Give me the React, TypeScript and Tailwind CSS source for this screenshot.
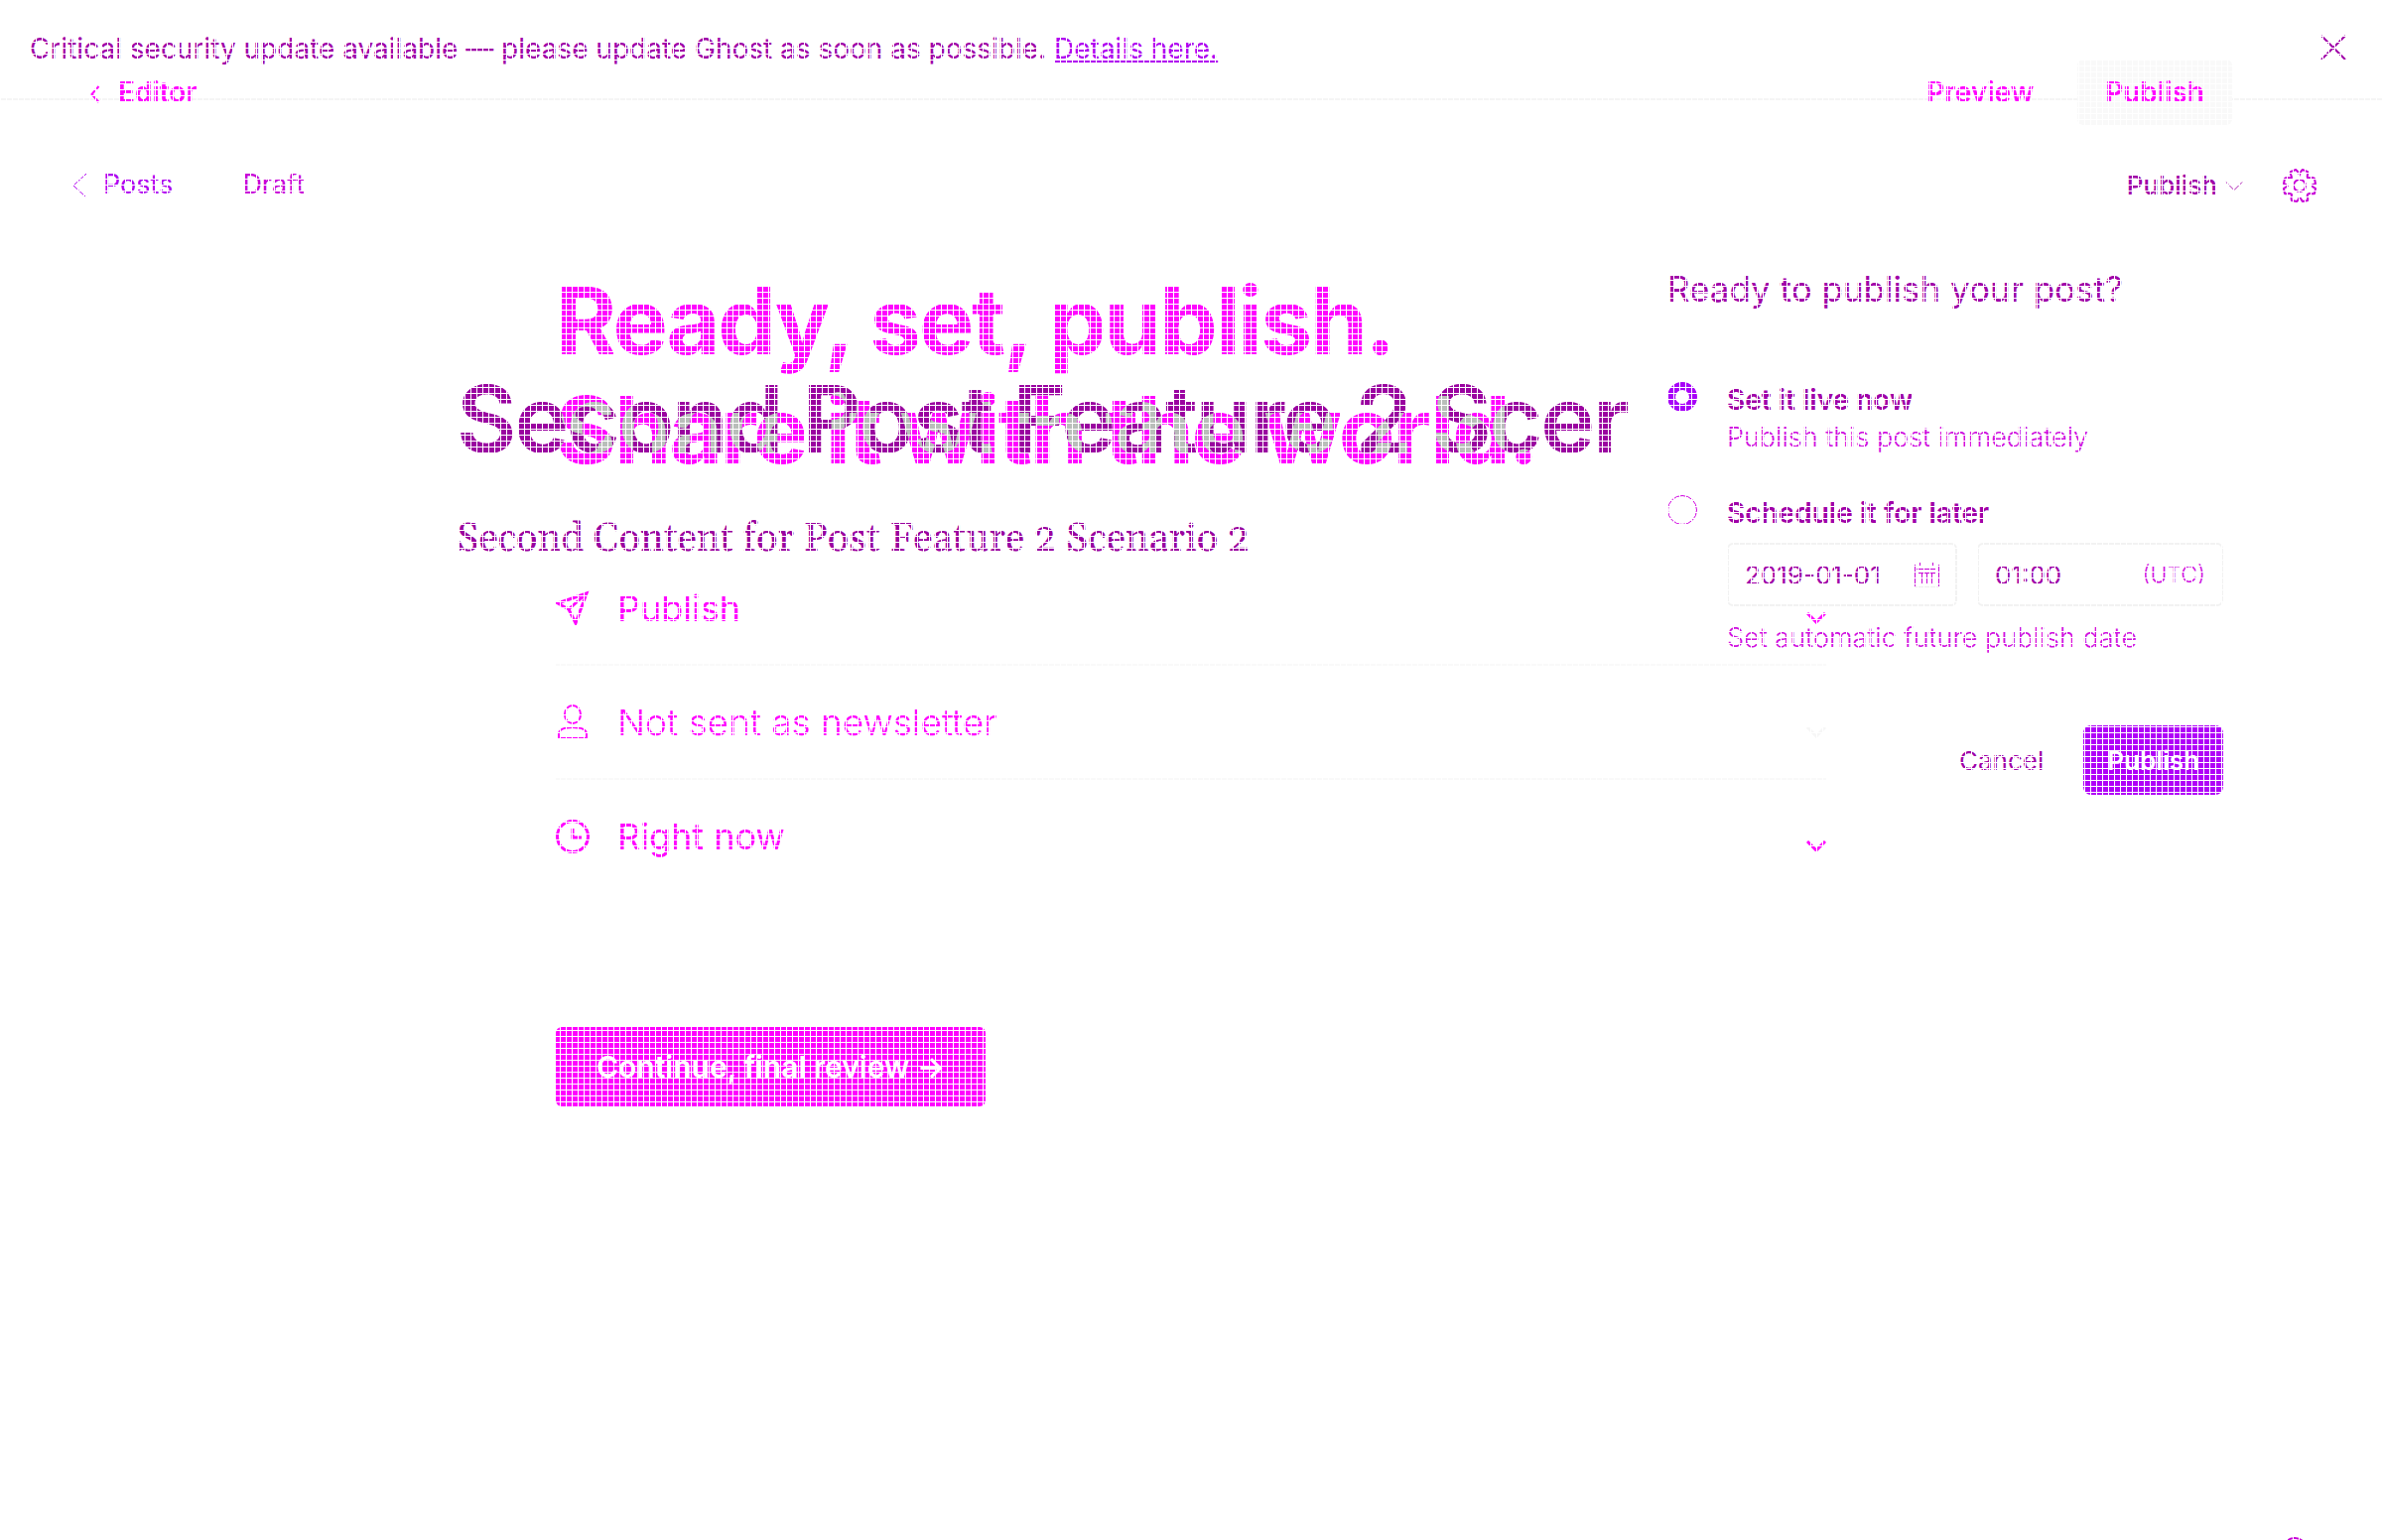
import React from "react";

function Chevron({ className, strokeWidth = 1 }: { className: string; strokeWidth?: number }) {
  return (
    <svg viewBox="0 0 20 12" className={className} fill="none" stroke="currentColor" strokeWidth={strokeWidth} aria-hidden="true">
      <path d="M1 1l9 9 9-9" />
    </svg>
  );
}

const settings = [
  {
    label: "Publish",
    muted: false,
    icon: (
      <>
        <path d="M31 3L2 13l11 6 7 14L31 3z" />
        <path d="M13 19L31 3" />
      </>
    ),
  },
  {
    label: "Not sent as newsletter",
    muted: true,
    icon: (
      <>
        <ellipse cx="17" cy="10" rx="8" ry="9" />
        <path d="M3 34v-4c0-5 6-7 14-7s14 2 14 7v4z" />
      </>
    ),
  },
  {
    label: "Right now",
    muted: false,
    icon: (
      <>
        <circle cx="17" cy="18" r="15.5" />
        <path d="M17 9v10h9" />
      </>
    ),
  },
];

function Banner() {
  return (
    <div className="flex h-[101px] items-start justify-between border-b-2 border-[#f5f5f5] pl-[30px] pr-9 pt-[33px]">
      <p className="text-[28px] leading-8 text-[#a000a8]">
        Critical security update available — please update Ghost as soon as possible.{" "}
        <a href="#details" className="text-[#b000f0] underline">Details here.</a>
      </p>
      <button type="button" aria-label="Close" className="mt-0.5 text-[#a000a8]">
        <svg viewBox="0 0 26 26" className="size-[26px]" fill="none" stroke="currentColor" strokeWidth="2">
          <path d="M1 1l24 24M25 1L1 25" />
        </svg>
      </button>
    </div>
  );
}

function EditorBar() {
  return (
    <div className="absolute inset-x-0 top-[61px] flex h-16 items-center justify-between pl-[90px] pr-[151px] text-[28px] font-semibold text-[#ff00ff]">
      <a href="#editor" className="flex items-center gap-[18px]">
        <svg viewBox="0 0 10 18" className="mt-1 h-[18px] w-[11px]" fill="none" stroke="currentColor" strokeWidth="2">
          <path d="M9 1L2 9l7 8" />
        </svg>
        Editor
      </a>
      <div className="flex items-center gap-11">
        <button type="button">Preview</button>
        <button type="button" className="h-[66px] rounded-md bg-[#f9f9f9] px-7">Publish</button>
      </div>
    </div>
  );
}

function PostBar() {
  return (
    <div className="flex h-[167px] items-center justify-between pl-[72px] pr-[66px] pt-1 text-[27px]">
      <div className="flex items-center gap-[70px]">
        <a href="#posts" className="flex items-center gap-4 text-[#b000f0]">
          <svg viewBox="0 0 16 26" className="h-[26px] w-4" fill="none" stroke="currentColor">
            <path d="M15 1L2 13l13 12" />
          </svg>
          Posts
        </a>
        <span className="text-[#c800d8]">Draft</span>
      </div>
      <div className="flex items-center gap-10">
        <button type="button" className="flex items-center gap-2 text-[26px] font-medium text-[#a000a8]">
          Publish <Chevron className="mt-0.5 h-3 w-[18px]" />
        </button>
        <button type="button" aria-label="Settings" className="text-[#c800d8]">
          <svg viewBox="0 0 34 34" className="size-[34px]" fill="none" stroke="currentColor" strokeWidth="2">
            <path d="M17 6C16 4 15 2 13 1L8 3c-1 2 1 4 1 6-2 1-5-1-7 1l-1 5c1 1 4 1 4 2s-3 2-4 3l1 5c2 1 5-1 7 1 0 2-1 4 0 6l5 1c2-1 2-4 3-4s2 3 3 4l5-1c1-2-1-4 0-6 2-2 5 0 7-1l1-5c-1-1-4-2-4-3s3-1 4-2l-1-5c-2-2-5 0-7-1-1-2 1-4 0-6l-5-2c-2 1-2 3-3 5z" />
            <circle cx="17" cy="17" r="6" />
          </svg>
        </button>
      </div>
    </div>
  );
}

/* Both titles share one grid cell; where their strokes cross, the filter turns them gray. */
function Titles() {
  return (
    <div className="grid items-start bg-white [filter:url(#cross-gray)]">
      <svg className="absolute size-0" aria-hidden="true">
        <filter id="cross-gray" colorInterpolationFilters="sRGB" x="0" y="0" width="1" height="1">
          <feColorMatrix values="0.154 -0.242 0.484 0 0.604  -2.48 -2.48 6.96 0 -1  0.167 -0.206 0.412 0 0.627  0 0 0 1 0" />
        </filter>
      </svg>
      <h1 className="col-start-1 row-start-1 pl-[560px] text-[93px] leading-[110px] font-bold tracking-tight text-[#ff0080] mix-blend-multiply">
        Ready, set, publish.
        <br />
        Share it with the world.
      </h1>
      <h2 className="col-start-1 row-start-1 mt-[99px] pl-[460px] text-[93px] leading-[110px] font-semibold tracking-tight whitespace-nowrap text-[#00ff80] mix-blend-multiply">
        Second Post Feature 2 Scer
      </h2>
    </div>
  );
}

function PublishFlow() {
  return (
    <section className="px-[560px] pt-[68px] text-[#ff00ff]">
      <ul>
        {settings.map((row) => (
          <li key={row.label} className="border-b-2 border-[#f9f9f9] last:border-0">
            <button type="button" className="flex h-[113px] w-full items-center text-left text-[36px]">
              <svg viewBox="0 0 34 36" className="h-9 w-[34px]" fill="none" stroke="currentColor" strokeWidth={row.muted ? 2 : 3}>
                {row.icon}
              </svg>
              <span className={row.muted ? "ml-7 flex-1 text-[37px] font-light" : "ml-7 flex-1"}>{row.label}</span>
              <Chevron className={row.muted ? "mt-5 h-3 w-5 text-[#f6f6f6]" : "mt-5 h-3 w-5"} strokeWidth={3} />
            </button>
          </li>
        ))}
      </ul>
      <button type="button" className="mt-[136px] h-20 rounded-md bg-[#ff00ff] px-[41px] text-[30px] font-semibold text-white">
        Continue, final review →
      </button>
    </section>
  );
}

function PublishMenu() {
  return (
    <aside className="absolute right-40 top-[268px] w-[560px] text-[#a000a8]">
      <h2 className="text-[35px] leading-[46px]">Ready to publish your post?</h2>
      <div className="mt-[71px] flex gap-[30px]">
        <input id="now" name="when" type="radio" defaultChecked className="size-[30px] shrink-0 appearance-none rounded-full border-8 border-[#a800f8]" />
        <div>
          <label htmlFor="now" className="block text-[28px] leading-9 font-semibold">Set it live now</label>
          <p className="text-[27px] leading-10 font-light text-[#d010e0]">Publish this post immediately</p>
        </div>
      </div>
      <div className="mt-[38px] flex gap-[30px]">
        <input id="later" name="when" type="radio" className="size-[30px] shrink-0 appearance-none rounded-full border border-[#d000e0]" />
        <div className="min-w-0 flex-1">
          <label htmlFor="later" className="block text-[28px] leading-9 font-semibold">Schedule it for later</label>
          <div className="mt-3 flex gap-5 text-[26px]">
            <div className="flex h-16 w-[232px] shrink-0 items-center rounded-md border-2 border-[#f2f2f2] px-4">
              <input aria-label="Date" defaultValue="2019-01-01" className="min-w-0 flex-1" />
              <svg viewBox="0 0 26 26" className="size-[26px]" fill="none" stroke="#c800d8" shapeRendering="crispEdges">
                <path d="M1 3v22M25 3v22M3 7h20M4 11h18M6 1v4M19 1v4M8 12v10M13 12v10M18 12v10" />
                <path d="M1 25h24" stroke="#eeeeee" />
              </svg>
            </div>
            <div className="flex h-16 min-w-0 flex-1 items-center rounded-md border-2 border-[#f2f2f2] px-4">
              <input aria-label="Time" defaultValue="01:00" className="min-w-0 flex-1" />
              <span className="text-[23px] font-light text-[#d010e0]">(UTC)</span>
            </div>
          </div>
          <p className="mt-3 text-[27px] leading-10 font-light text-[#d010e0]">Set automatic future publish date</p>
        </div>
      </div>
      <div className="mt-[68px] flex items-center justify-end gap-10 text-[26px]">
        <button type="button">Cancel</button>
        <button type="button" className="h-[70px] rounded-lg bg-[#b000f8] px-6 font-semibold text-white">Publish</button>
      </div>
    </aside>
  );
}

export default function App() {
  return (
    <main className="relative min-h-screen overflow-hidden bg-white font-['Inter',sans-serif]">
      <Banner />
      <EditorBar />
      <PostBar />
      <Titles />
      <p className="absolute left-[460px] top-[522px] font-['Georgia','Gelasio',serif] text-[40px] leading-[44px] text-[#9a00a0] [font-variant-numeric:oldstyle-nums]">
        Second Content for Post Feature 2 Scenario 2
      </p>
      <PublishFlow />
      <PublishMenu />
      <button type="button" aria-label="Help" className="absolute right-[75px] -bottom-[23px] size-[26px] rounded-full border-2 border-[#c800d8]" />
      <div className="pointer-events-none absolute inset-0 z-20 bg-[linear-gradient(to_right,white_1px,transparent_1px),linear-gradient(to_bottom,white_1px,transparent_1px)] bg-size-[6px_6px]" />
    </main>
  );
}
